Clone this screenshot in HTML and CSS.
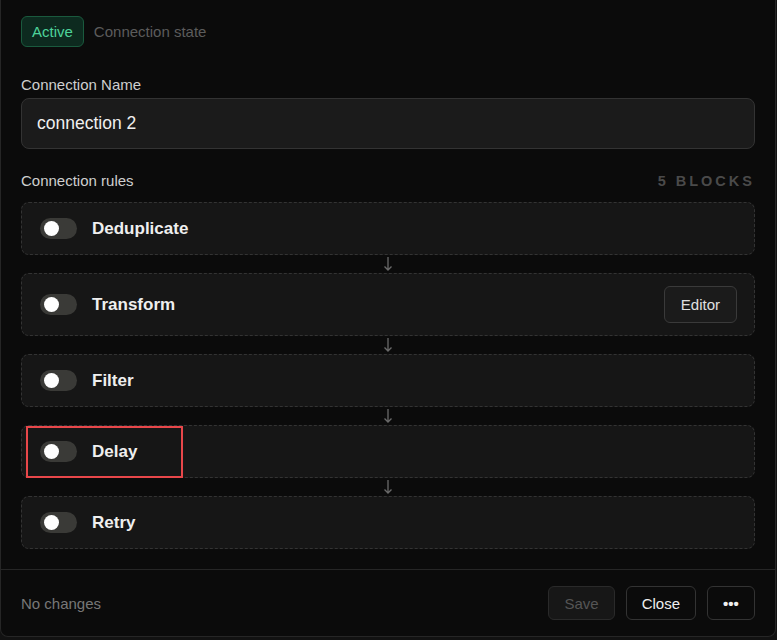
FILE: index.html
```html
<!DOCTYPE html>
<html lang="en">
  <head>
    <meta charset="UTF-8" />
    <meta name="viewport" content="width=device-width, initial-scale=1.0" />
    <title>Connection settings</title>
    <link rel="stylesheet" href="styles.css">
  </head>
  <body>
    <div class="dialog">
      <div class="dialog-body">
        <!-- state -->
        <div class="state-row">
          <span class="badge">Active</span>
          <span class="muted">Connection state</span>
        </div>

        <!-- name -->
        <label class="field-label" for="connName">Connection Name</label>
        <input id="connName" class="text-input" type="text" value="connection 2" />

        <!-- rules -->
        <div class="rules-head">
          <span class="field-label">Connection rules</span>
          <span class="count">5 BLOCKS</span>
        </div>

        <div class="rules">
          <div class="rule">
            <span class="toggle"><span class="knob"></span></span>
            <span class="rule-name">Deduplicate</span>
          </div>
          <div class="link">
            <svg width="10" height="16" viewBox="0 0 10 16"><path d="M5 1v13M1.5 10.5 5 14l3.5-3.5" fill="none" stroke="#6a6a6a" stroke-width="1.3"/></svg>
          </div>
          <div class="rule">
            <span class="toggle"><span class="knob"></span></span>
            <span class="rule-name">Transform</span>
            <button class="btn rule-btn">Editor</button>
          </div>
          <div class="link">
            <svg width="10" height="16" viewBox="0 0 10 16"><path d="M5 1v13M1.5 10.5 5 14l3.5-3.5" fill="none" stroke="#6a6a6a" stroke-width="1.3"/></svg>
          </div>
          <div class="rule">
            <span class="toggle"><span class="knob"></span></span>
            <span class="rule-name">Filter</span>
          </div>
          <div class="link">
            <svg width="10" height="16" viewBox="0 0 10 16"><path d="M5 1v13M1.5 10.5 5 14l3.5-3.5" fill="none" stroke="#6a6a6a" stroke-width="1.3"/></svg>
          </div>
          <div class="rule">
            <span class="toggle"><span class="knob"></span></span>
            <span class="rule-name">Delay</span>
            <span class="focus-ring"></span>
          </div>
          <div class="link">
            <svg width="10" height="16" viewBox="0 0 10 16"><path d="M5 1v13M1.5 10.5 5 14l3.5-3.5" fill="none" stroke="#6a6a6a" stroke-width="1.3"/></svg>
          </div>
          <div class="rule">
            <span class="toggle"><span class="knob"></span></span>
            <span class="rule-name">Retry</span>
          </div>
        </div>
      </div>

      <!-- footer -->
      <div class="dialog-foot">
        <span class="muted foot-note">No changes</span>
        <div class="actions">
          <button class="btn btn-disabled">Save</button>
          <button class="btn">Close</button>
          <button class="btn btn-more">&bull;&bull;&bull;</button>
        </div>
      </div>
    </div>
  </body>
</html>
```
FILE: styles.css
```css
:root {
  --bg: #0b0b0b;
  --panel: #161616;
  --field: #1b1b1b;
  --line: #262626;
  --dash: #333;
  --text: #efefef;
  --label: #cfcfcf;
  --muted: #5c5c5c;
}

body {
  margin: 0;
  background-color: #121212;
  color: var(--text);
  font-family: "Liberation Sans", Arial, sans-serif;
  font-size: 15px;
}

.dialog {
  width: 776px;
  box-sizing: border-box;
  background-color: var(--bg);
  border: 1px solid var(--line);
  border-top: none;
  border-radius: 0 0 8px 8px;
}
.dialog-body {
  padding: 16px 20px 20px;
}

.state-row {
  display: flex;
  align-items: center;
  gap: 10px;
}
.badge {
  padding: 6px 10px;
  line-height: 17px;
  color: #4dd39a;
  background-color: #0d2a1f;
  border: 1px solid #1a5a3e;
  border-radius: 6px;
}
.muted {
  color: var(--muted);
}

.field-label {
  display: block;
  color: var(--label);
  line-height: 17px;
}
label.field-label {
  margin: 29px 0 5px;
}
.text-input {
  display: block;
  width: 100%;
  height: 51px;
  box-sizing: border-box;
  padding: 0 15px;
  background-color: var(--field);
  color: var(--text);
  border: 1px solid #333;
  border-radius: 8px;
  font-family: inherit;
  font-size: 17.5px;
  outline: none;
}

.rules-head {
  display: flex;
  justify-content: space-between;
  align-items: center;
  margin: 23px 0 13px;
}
.count {
  color: #4a4a4a;
  font-weight: bold;
  font-size: 14.5px;
  letter-spacing: 3px;
}

.rules {
  display: flex;
  flex-direction: column;
}
.rule {
  position: relative;
  display: flex;
  align-items: center;
  min-height: 53px;
  box-sizing: border-box;
  padding: 12px 17px 12px 18px;
  background-color: var(--panel);
  border: 1px dashed var(--dash);
  border-radius: 8px;
}
.link {
  display: flex;
  justify-content: center;
  align-items: center;
  height: 18px;
}
.link svg {
  display: block;
}

.toggle {
  display: flex;
  align-items: center;
  width: 37px;
  height: 21px;
  box-sizing: border-box;
  padding: 0 4px;
  background-color: #3a3a37;
  border-radius: 11px;
}
.knob {
  width: 15px;
  height: 15px;
  background-color: #fff;
  border-radius: 50%;
}
.rule-name {
  margin-left: 15px;
  font-size: 17px;
  font-weight: bold;
  color: var(--text);
}

.btn {
  height: 34px;
  padding: 0 15px;
  background-color: var(--bg);
  color: var(--text);
  border: 1px solid #333;
  border-radius: 6px;
  font-family: inherit;
  font-size: 15px;
  cursor: pointer;
}
.rule-btn {
  margin-left: auto;
  height: 37px;
  padding: 0 16px;
  background-color: #1b1b1b;
  border-color: #3a3a3a;
  color: #e0e0e0;
}
.btn-disabled {
  background-color: #171717;
  border-color: #2a2a2a;
  color: #555;
  cursor: default;
}
.btn-more {
  width: 48px;
  padding: 0;
  font-size: 15px;
  font-weight: bold;
}

/* highlight drawn over the Delay row */
.focus-ring {
  position: absolute;
  left: 4px;
  top: 0;
  width: 157px;
  height: 52px;
  box-sizing: border-box;
  border: 2px solid #e8474a;
}

.dialog-foot {
  display: flex;
  justify-content: space-between;
  align-items: center;
  padding: 16px 20px;
  border-top: 1px solid var(--line);
}
.foot-note {
  color: #777;
}
.actions {
  display: flex;
  gap: 11px;
}
```
